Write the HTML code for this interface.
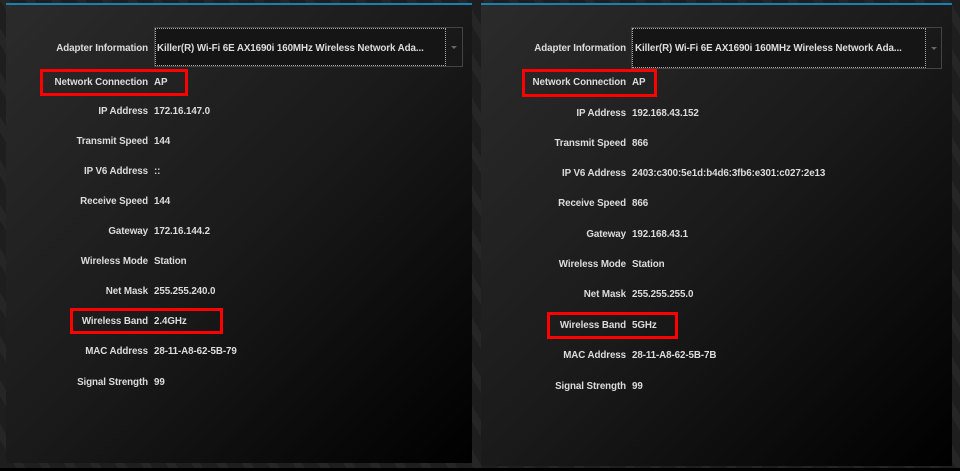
<!DOCTYPE html>
<html><head><meta charset="utf-8"><style>
body{margin:0;width:960px;height:471px;overflow:hidden;background:#000;font-family:"Liberation Sans",sans-serif;}
.bg{position:absolute;left:0;top:0;width:960px;height:468px;background:repeating-linear-gradient(60deg,#1e1e1e 0 14px,#262626 14px 22px);}
.p{position:absolute;background:linear-gradient(135deg,#2b2b2b 0%,#1a1a1a 50%,#000 100%);border-top:2px solid #1a7fb5;}
.t{position:absolute;color:#dcdcdc;font-size:9.8px;font-weight:bold;white-space:nowrap;line-height:12px;letter-spacing:-0.1px;}
.l{text-align:right;}
.red{position:absolute;border:3px solid #f00;box-sizing:border-box;}
.dd{position:absolute;border:1px dotted #aaa;box-sizing:border-box;background:#151515;}
.ddo{position:absolute;border:1px solid #444;box-sizing:border-box;}
.arr{position:absolute;width:0;height:0;border-left:3px solid transparent;border-right:3px solid transparent;border-top:3px solid #666;}
</style></head><body>
<div class="bg"></div>
<div class="p" style="left:6px;top:3px;width:466px;height:458px"></div>
<div class="p" style="left:481px;top:3px;width:471px;height:461px"></div>

<div class="ddo" style="left:154px;top:27px;width:309px;height:40px"></div>
<div class="dd" style="left:155px;top:28px;width:291px;height:38px"></div>
<div class="arr" style="left:451px;top:46px"></div>
<div class="ddo" style="left:631px;top:27px;width:311px;height:42px"></div>
<div class="dd" style="left:632px;top:28px;width:294px;height:40px"></div>
<div class="arr" style="left:931px;top:47px"></div>

<div class="red" style="left:40px;top:69px;width:148px;height:27px"></div>
<div class="red" style="left:70px;top:308px;width:153px;height:26px"></div>
<div class="red" style="left:522px;top:69px;width:135px;height:28px"></div>
<div class="red" style="left:547px;top:312px;width:131px;height:27px"></div>

<div id="L"></div>
<script>
function rows(lx,vx,ys,labels,vals){let h='';for(let i=0;i<ys.length;i++){h+=`<div class="t l" style="right:${960-lx}px;top:${ys[i]-5}px">${labels[i]}</div><div class="t" style="left:${vx+(i==0?3:0)}px;top:${ys[i]-5}px">${vals[i]}</div>`;}return h;}
const lab=["Adapter Information","Network Connection","IP Address","Transmit Speed","IP V6 Address","Receive Speed","Gateway","Wireless Mode","Net Mask","Wireless Band","MAC Address","Signal Strength"];
const a="Killer(R) Wi-Fi 6E AX1690i 160MHz Wireless Network Ada...";
document.getElementById('L').innerHTML=
rows(148,154,[48,82,111,141,171,201,231,261,291,321,351,382],lab,[a,"AP","172.16.147.0","144","::","144","172.16.144.2","Station","255.255.240.0","2.4GHz","28-11-A8-62-5B-79","99"])+
rows(626,632,[48,82,113,143,173,203,234,264,294,325,355,386],lab,[a,"AP","192.168.43.152","866","2403:c300:5e1d:b4d6:3fb6:e301:c027:2e13","866","192.168.43.1","Station","255.255.255.0","5GHz","28-11-A8-62-5B-7B","99"]);
</script>
</body></html>
